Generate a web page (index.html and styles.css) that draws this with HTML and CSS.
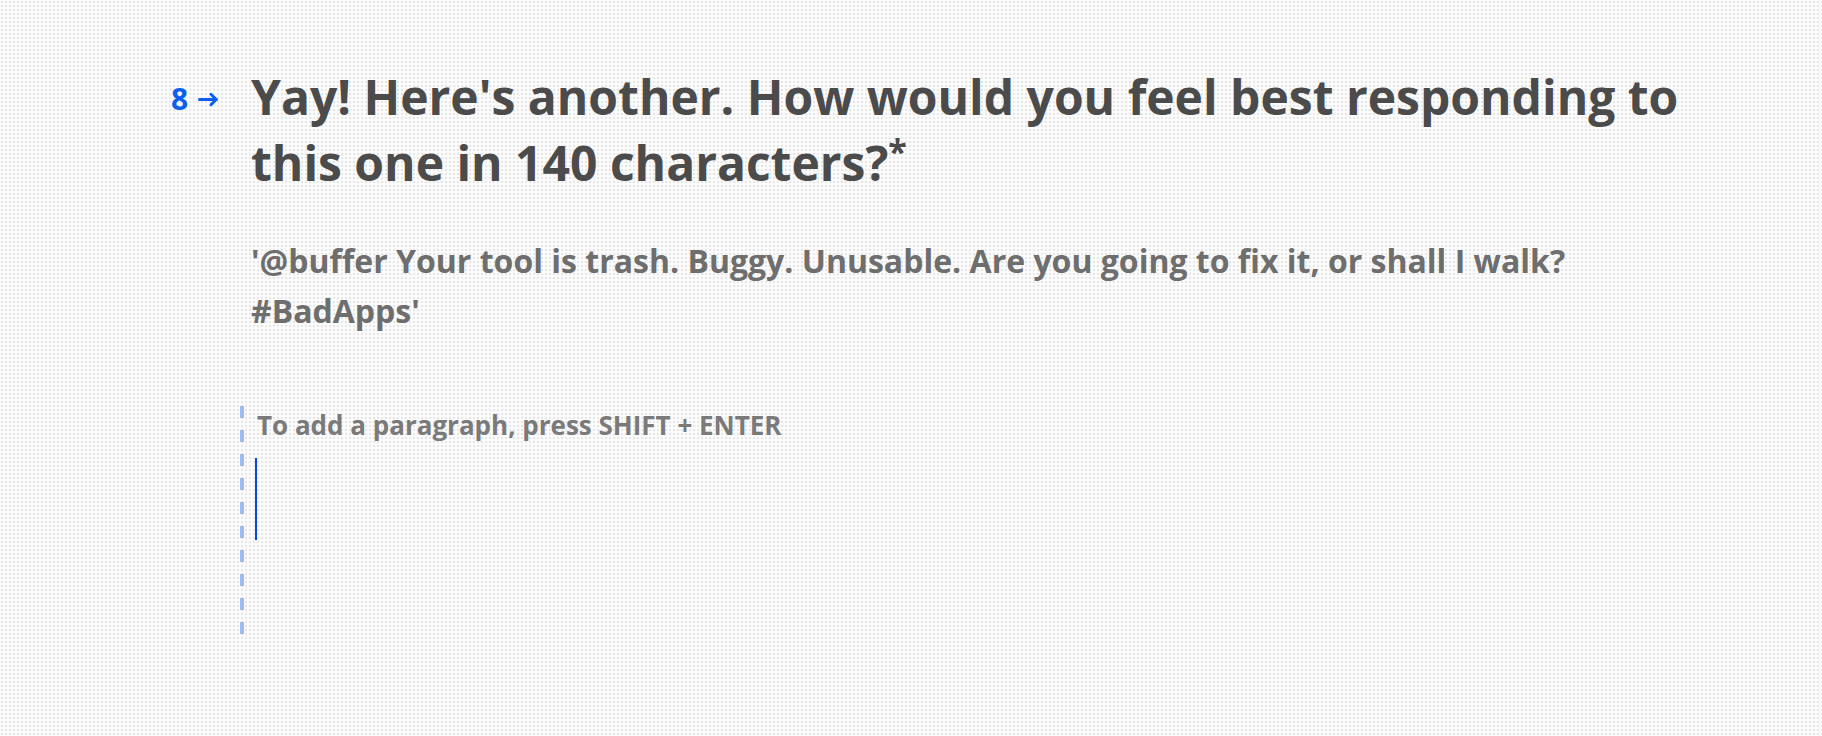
FILE: index.html
```html
<!DOCTYPE html>
<html lang="en">
<head>
    <meta charset="UTF-8">
    <meta name="viewport" content="width=device-width, initial-scale=1.0">
    <title>Question 8</title>
    <link rel="stylesheet" href="styles.css">
</head>
<body>
    <div class="question">
        <div class="counter">
            <span class="counter-num">8</span>
            <svg class="counter-arrow" width="21" height="15" viewBox="0 0 21 15">
                <path d="M1.5 7.5h17M13 2.3l5.2 5.2-5.2 5.2" fill="none" stroke="currentColor" stroke-width="3" stroke-linecap="round" stroke-linejoin="round"/>
            </svg>
        </div>
        <div class="question-body">
            <h1 class="question-title">Yay! Here's another. How would you feel best responding to this one in 140 characters?<sup class="required">*</sup></h1>
            <p class="question-quote">'@buffer Your tool is trash. Buggy. Unusable. Are you going to fix it, or shall I walk? #BadApps'</p>
            <div class="answer">
                <div class="answer-hint">To add a paragraph, press SHIFT + ENTER</div>
                <div class="answer-cursor"></div>
            </div>
        </div>
    </div>
</body>
</html>
```

FILE: styles.css
```css
/* General styling */
body {
    margin: 0;
    padding: 0;
    height: 100vh;
    overflow: hidden;
    font-family: 'Open Sans', 'Noto Sans', sans-serif;
    font-weight: 700;
    background-color: #fbfbfb;
    background-image: radial-gradient(circle, #e6e6e6 0.8px, transparent 1px);
    background-size: 4px 4px;
}

.question {
    display: flex;
    padding: 64px 0 0 171px;
}

.counter {
    display: flex;
    align-items: center;
    gap: 10px;
    width: 80px;
    height: 70px;
    color: #0b5ef0;
    align-self: flex-start;
}

.counter-num {
    font-size: 30px;
    line-height: 1;
}

.question-body {
    width: 1432px;
}

.question-title {
    margin: 0;
    font-size: 48px;
    line-height: 66px;
    font-weight: 700;
    color: #4b4b4b;
}

.required {
    font-size: 34px;
    line-height: 0;
    vertical-align: 17px;
}

.question-quote {
    margin: 40px 0 0;
    font-size: 32px;
    line-height: 50px;
    color: #6e6e6e;
}

.answer {
    margin: 66px 0 0 -11px;
    padding: 7px 0 0 17px;
    height: 227px;
    background-image: linear-gradient(to bottom, #9dbcf7 12px, transparent 12px);
    background-size: 4px 24px;
    background-position: 0 4px;
    background-repeat: repeat-y;
}

.answer-hint {
    font-size: 26px;
    line-height: 32px;
    color: #7a7a7a;
}

.answer-cursor {
    width: 2px;
    height: 82px;
    margin: 17px 0 0 -2px;
    background-color: #0a46d8;
}
```
